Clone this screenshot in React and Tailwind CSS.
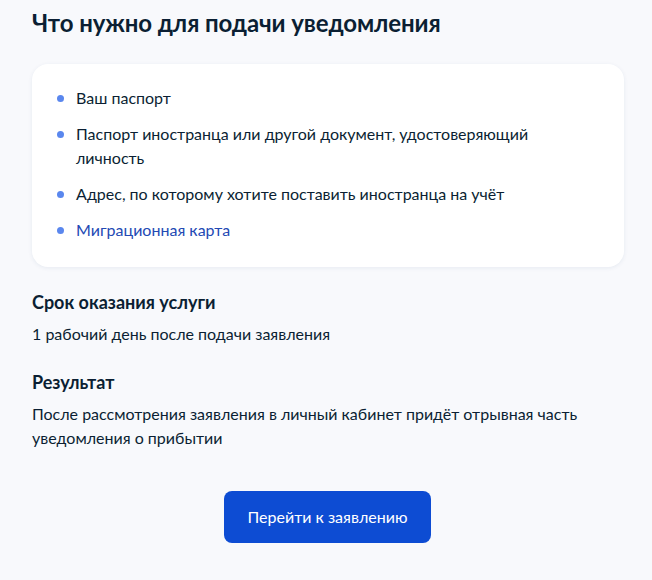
import React from "react";

const items = [
  { text: "Ваш паспорт" },
  { text: "Паспорт иностранца или другой документ, удостоверяющий личность" },
  { text: "Адрес, по которому хотите поставить иностранца на учёт" },
  { text: "Миграционная карта", link: true },
];

export default function App() {
  return (
    <div
      className="w-[652px] min-h-[580px] bg-[#f8f9fc] text-[#0b1f33] pl-8 pr-[28px] pt-[10px] pb-9"
      style={{ fontFamily: "Lato, 'Noto Sans', sans-serif" }}
    >
      <h2 className="text-[24px] leading-[26px] font-bold tracking-[-0.1px]">
        Что нужно для подачи уведомления
      </h2>
      <div className="mt-[28px] bg-white rounded-2xl shadow-[0_1px_4px_rgba(30,60,120,0.08)] pl-[24px] pr-6 pt-[22px] pb-[25px]">
        <ul className="flex flex-col gap-3">
          {items.map((it, i) => (
            <li key={i} className="flex items-start text-[16px] leading-[24px]">
              <span className="w-[7px] h-[7px] rounded-full bg-[#5a87ee] mt-[8.5px] ml-[1px] mr-[12px] shrink-0" />
              <span className={it.link ? "text-[#2349b4]" : ""}>{it.text}</span>
            </li>
          ))}
        </ul>
      </div>
      <h3 className="mt-[23px] text-[18px] leading-[24px] font-bold">Срок оказания услуги</h3>
      <p className="mt-2 text-[16px] leading-[24px]">1 рабочий день после подачи заявления</p>
      <h3 className="mt-6 text-[18px] leading-[24px] font-bold">Результат</h3>
      <p className="mt-2 text-[16px] leading-[24px]">
        После рассмотрения заявления в личный кабинет придёт отрывная часть уведомления о прибытии
      </p>
      <div className="flex justify-center mt-[41px] pr-[1px]">
        <button className="h-[52px] w-[207px] rounded-lg bg-[#0d4cd3] text-white text-[16px] whitespace-nowrap">
          Перейти к заявлению
        </button>
      </div>
    </div>
  );
}
